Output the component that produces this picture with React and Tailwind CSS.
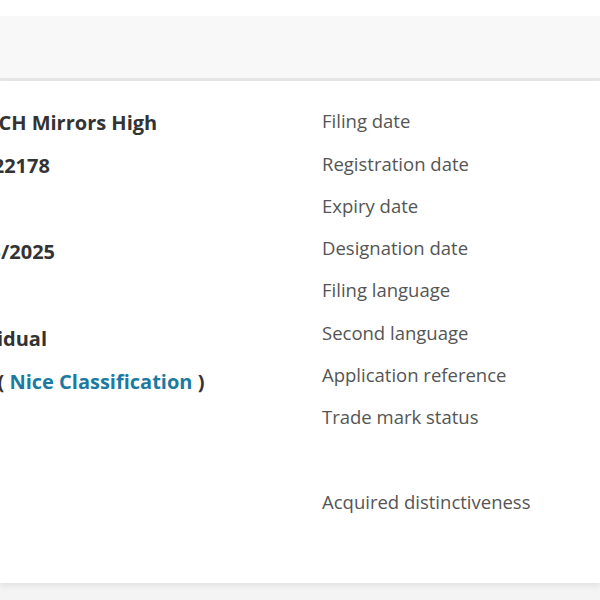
import React from 'react';

const values = [
  { text: 'DATECH Mirrors High' },
  { text: '018922178' },
  { text: 'Word' },
  { text: '12/05/2025' },
  { text: 'EN' },
  { text: 'Individual' },
  { nice: true },
];

const labels = [
  'Filing date',
  'Registration date',
  'Expiry date',
  'Designation date',
  'Filing language',
  'Second language',
  'Application reference',
  'Trade mark status',
  '',
  'Acquired distinctiveness',
];

const App = () => {
  return (
    <div className="w-[600px] h-[600px] overflow-hidden bg-[#f4f4f4] font-['Open_Sans',sans-serif]">
      <div className="h-[16px] bg-white" />
      <div className="h-[65px] bg-[#f8f8f8] border-b-[3px] border-[#e6e6e6]" />

      <div className="h-[502px] bg-white shadow-[0_3px_6px_rgba(0,0,0,0.08)] flex pt-[19px]">
        <div className="w-[322px] shrink-0 overflow-hidden pt-[1px]">
          <div className="-ml-[53px] flex flex-col">
            {values.map((v, i) => (
              <div key={i} className="h-[43.2px] flex items-center whitespace-nowrap text-[20px] font-bold text-[#333]">
                {v.nice ? (
                  <span>
                    3, 20 ( <span className="text-[#1c7aa1]">Nice Classification</span> )
                  </span>
                ) : (
                  <span>{v.text}</span>
                )}
              </div>
            ))}
          </div>
        </div>

        <div className="flex flex-col">
          {labels.map((l, i) => (
            <div key={i} className="h-[42.3px] flex items-center whitespace-nowrap text-[18.5px] text-[#555]">
              {l}
            </div>
          ))}
        </div>
      </div>
    </div>
  );
};

export default App;
